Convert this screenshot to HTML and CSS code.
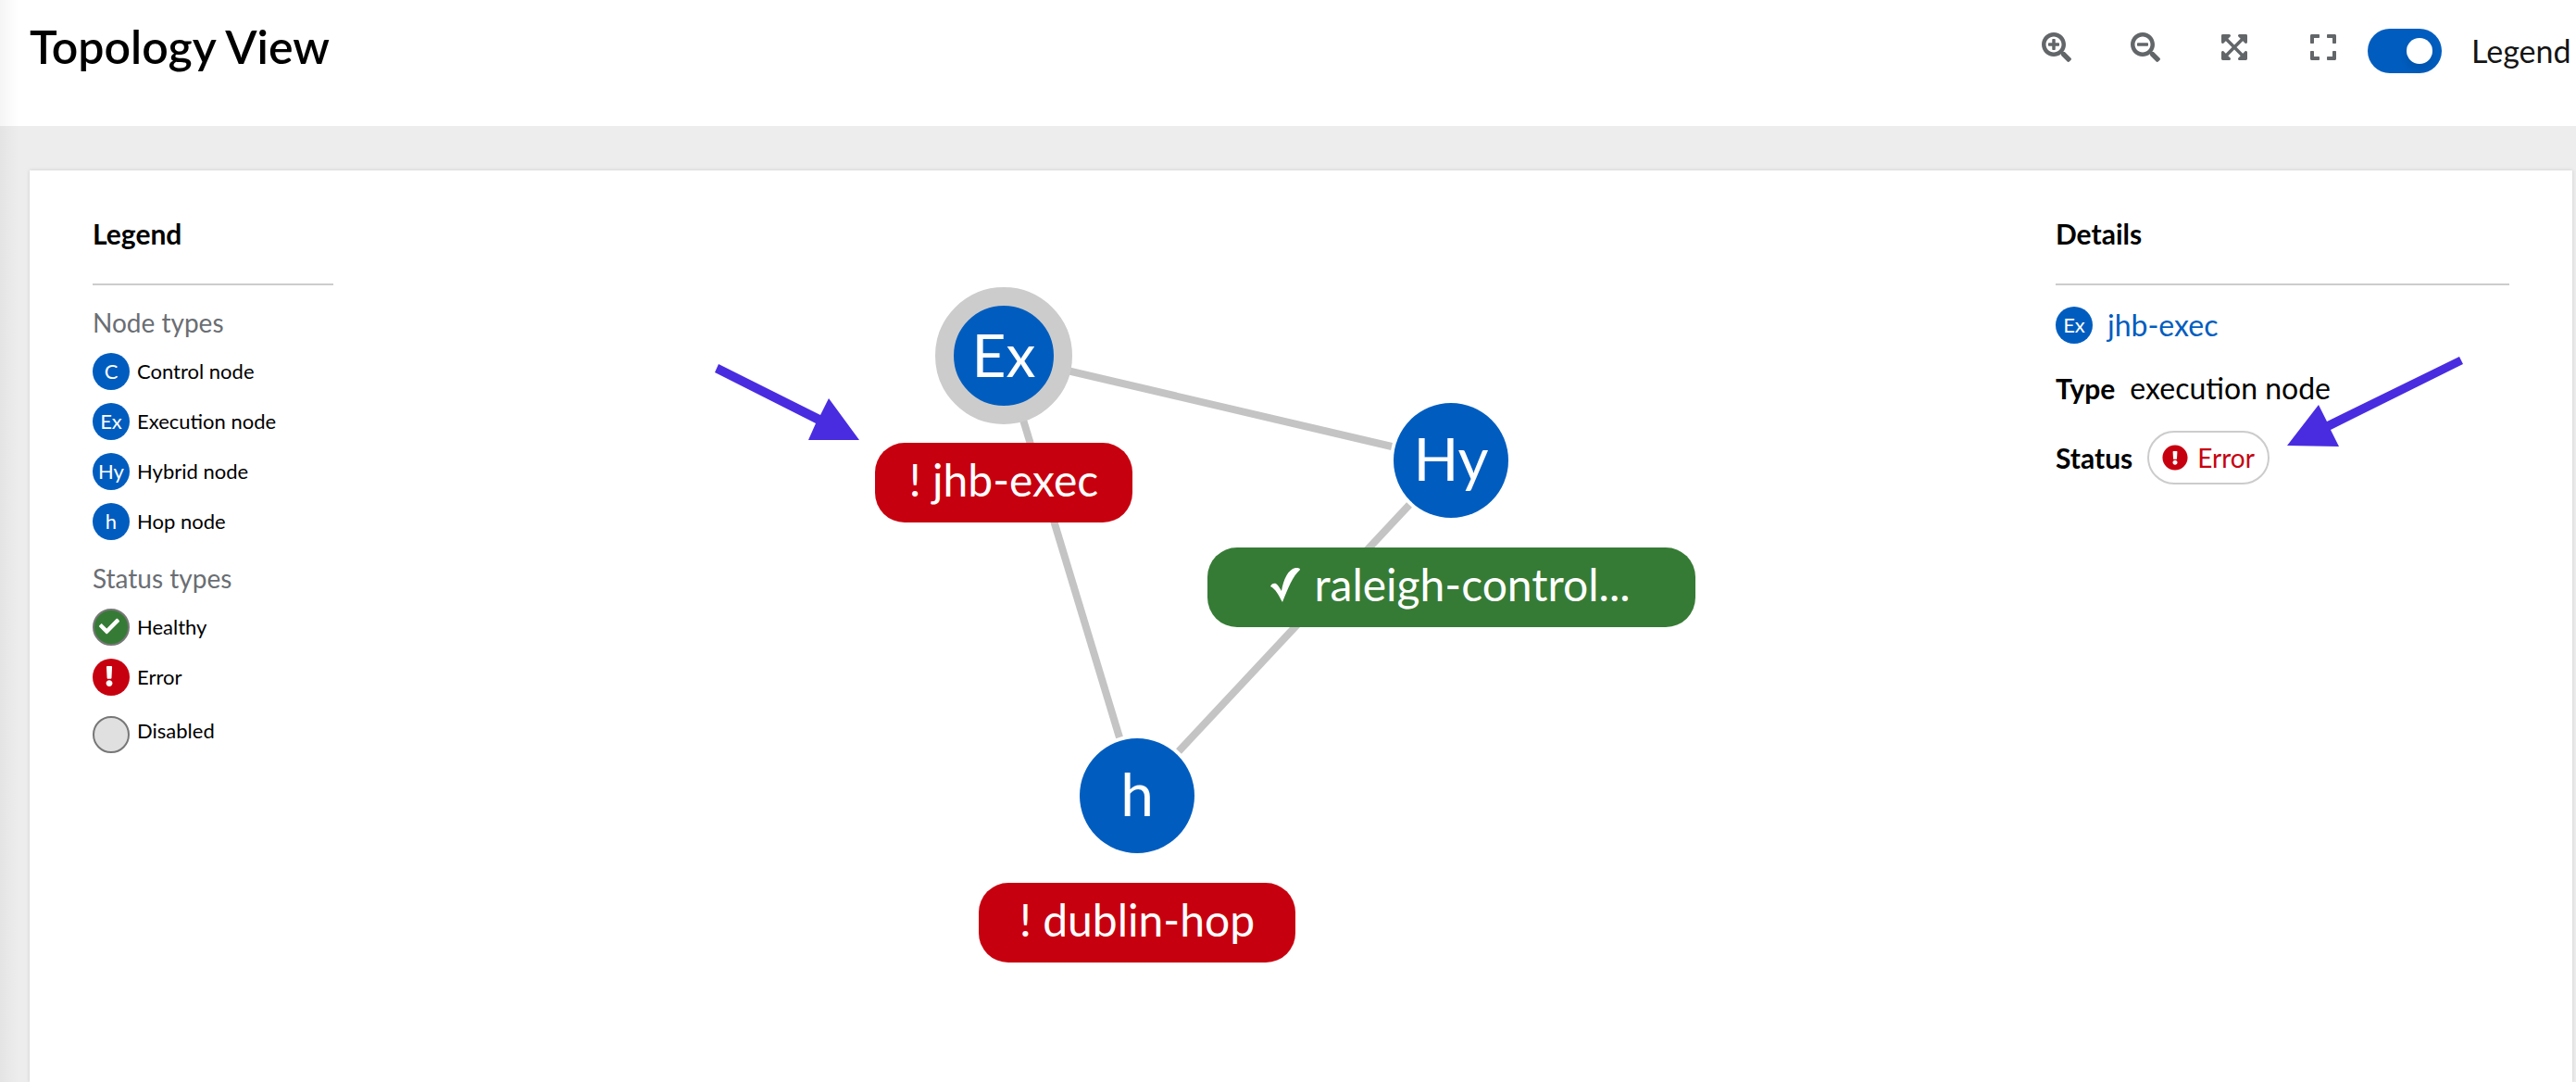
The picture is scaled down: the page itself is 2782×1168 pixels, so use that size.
FILE: index.html
```html
<!DOCTYPE html>
<html lang="en">
<head>
<meta charset="utf-8">
<meta name="viewport" content="width=device-width, initial-scale=1">
<title>Topology View</title>
<link rel="stylesheet" href="styles.css">
</head>
<body>
<header class="page-header">
  <h1 class="page-title">Topology View</h1>
  <div class="toolbar">
    <button class="icon-button" type="button" aria-label="Zoom in">
      <svg class="icon" viewBox="0 0 512 512" aria-hidden="true"><path d="M304 192v32c0 6.600-5.400 12-12 12h-56v56c0 6.600-5.400 12-12 12h-32c-6.600 0-12-5.400-12-12v-56h-56c-6.600 0-12-5.400-12-12v-32c0-6.600 5.400-12 12-12h56v-56c0-6.600 5.400-12 12-12h32c6.600 0 12 5.400 12 12v56h56c6.600 0 12 5.400 12 12zm201 284.700L476.700 505c-9.400 9.400-24.600 9.400-33.900 0L343 405.300c-4.500-4.500-7-10.600-7-17V372c-35.300 27.600-79.700 44-128 44C93.100 416 0 322.900 0 208S93.100 0 208 0s208 93.100 208 208c0 48.300-16.400 92.700-44 128h16.300c6.400 0 12.500 2.500 17 7l99.700 99.700c9.300 9.400 9.300 24.600 0 34zM344 208c0-75.200-60.800-136-136-136S72 132.800 72 208s60.800 136 136 136 136-60.800 136-136z"/></svg>
    </button>
    <button class="icon-button" type="button" aria-label="Zoom out">
      <svg class="icon" viewBox="0 0 512 512" aria-hidden="true"><path d="M304 192v32c0 6.600-5.400 12-12 12H124c-6.600 0-12-5.400-12-12v-32c0-6.600 5.400-12 12-12h168c6.600 0 12 5.400 12 12zm201 284.700L476.700 505c-9.400 9.400-24.600 9.400-33.900 0L343 405.300c-4.500-4.500-7-10.600-7-17V372c-35.300 27.600-79.700 44-128 44C93.100 416 0 322.900 0 208S93.100 0 208 0s208 93.100 208 208c0 48.300-16.400 92.700-44 128h16.300c6.400 0 12.500 2.500 17 7l99.700 99.700c9.300 9.400 9.300 24.600 0 34zM344 208c0-75.200-60.800-136-136-136S72 132.800 72 208s60.800 136 136 136 136-60.800 136-136z"/></svg>
    </button>
    <button class="icon-button" type="button" aria-label="Fit to screen">
      <svg class="icon" viewBox="0 0 448 512" aria-hidden="true"><path d="M448 344v112a23.940 23.940 0 0 1-24 24H312c-21.390 0-32.090-25.900-17-41l36.200-36.200L224 295.600 116.770 402.900 153 439c15.090 15.100 4.390 41-17 41H24a23.940 23.940 0 0 1-24-24V344c0-21.400 25.890-32.100 41-17l36.190 36.200L184.460 256 77.180 148.700 41 185c-15.100 15.100-41 4.400-41-17V56a23.940 23.940 0 0 1 24-24h112c21.390 0 32.090 25.900 17 41l-36.200 36.200L224 216.400l107.230-107.300L295 73c-15.090-15.100-4.390-41 17-41h112a23.940 23.940 0 0 1 24 24v112c0 21.400-25.890 32.100-41 17l-36.190-36.200L263.540 256l107.280 107.300L407 327.100c15.100-15.200 41-4.500 41 16.900z"/></svg>
    </button>
    <button class="icon-button" type="button" aria-label="Reset zoom">
      <svg class="icon" viewBox="0 0 448 512" aria-hidden="true"><path d="M0 180V56c0-13.300 10.700-24 24-24h124c6.600 0 12 5.400 12 12v40c0 6.600-5.400 12-12 12H64v84c0 6.600-5.400 12-12 12H12c-6.600 0-12-5.400-12-12zM288 44v40c0 6.600 5.400 12 12 12h84v84c0 6.600 5.400 12 12 12h40c6.600 0 12-5.400 12-12V56c0-13.300-10.700-24-24-24H300c-6.600 0-12 5.400-12 12zm148 276h-40c-6.600 0-12 5.400-12 12v84h-84c-6.600 0-12 5.400-12 12v40c0 6.600 5.400 12 12 12h124c13.300 0 24-10.700 24-24V332c0-6.600-5.400-12-12-12zM160 468v-40c0-6.600-5.400-12-12-12H64v-84c0-6.600-5.400-12-12-12H12c-6.600 0-12 5.400-12 12v124c0 13.300 10.700 24 24 24h124c6.600 0 12-5.400 12-12z"/></svg>
    </button>
    <div class="switch">
      <input class="switch-input" type="checkbox" id="legend-toggle" checked>
      <label class="switch-label" for="legend-toggle">Legend</label>
    </div>
  </div>
</header>

<main class="page-body">
  <section class="card">
    <aside class="legend">
      <h2 class="panel-title">Legend</h2>
      <h3 class="group-title">Node types</h3>
      <ul class="legend-list">
        <li class="legend-item"><span class="badge">C</span><span>Control node</span></li>
        <li class="legend-item"><span class="badge">Ex</span><span>Execution node</span></li>
        <li class="legend-item"><span class="badge">Hy</span><span>Hybrid node</span></li>
        <li class="legend-item"><span class="badge">h</span><span>Hop node</span></li>
      </ul>
      <h3 class="group-title group-title-spaced">Status types</h3>
      <ul class="legend-list">
        <li class="legend-item">
          <svg class="status-icon" viewBox="0 0 40 40" aria-hidden="true"><circle cx="20" cy="20" r="19" fill="#367b35" stroke="#777" stroke-width="2"/><path transform="translate(7 8) scale(.043)" fill="#fff" d="M173.898 439.404l-166.400-166.400c-9.997-9.997-9.997-26.206 0-36.204l36.203-36.204c9.997-9.998 26.207-9.998 36.204 0L192 312.690 432.095 72.596c9.997-9.997 26.207-9.997 36.204 0l36.203 36.204c9.997 9.997 9.997 26.206 0 36.204l-294.400 294.401c-9.998 9.997-26.207 9.997-36.204-.001z"/></svg>
          <span>Healthy</span>
        </li>
        <li class="legend-item">
          <svg class="status-icon" viewBox="0 0 40 40" aria-hidden="true"><circle cx="20" cy="20" r="20" fill="#c7000f"/><path transform="translate(13.900 8) scale(.043)" fill="#fff" d="M176 432c0 44.112-35.888 80-80 80s-80-35.888-80-80 35.888-80 80-80 80 35.888 80 80zM25.260 25.199l13.600 272C39.499 309.972 50.041 320 62.830 320h66.340c12.789 0 23.331-10.028 23.970-22.801l13.600-272C167.425 11.490 156.496 0 142.770 0H49.230C35.504 0 24.575 11.490 25.260 25.199z"/></svg>
          <span>Error</span>
        </li>
        <li class="legend-item legend-item-disabled">
          <svg class="status-icon" viewBox="0 0 40 40" aria-hidden="true"><circle cx="20" cy="20" r="19" fill="#e0e0e0" stroke="#777" stroke-width="2"/></svg>
          <span class="disabled-text">Disabled</span>
        </li>
      </ul>
    </aside>

    <svg class="graph" viewBox="360 184 1860 984" role="img" aria-label="Mesh topology">
      <g class="edges">
        <line x1="1084" y1="384" x2="1503" y2="482"/>
        <line x1="1084" y1="384" x2="1209" y2="796"/>
        <line x1="1522" y1="545" x2="1273" y2="811"/>
      </g>
      <circle cx="1084" cy="384" r="64" fill="#005dbf" stroke="#ccc" stroke-width="20"/>
      <circle class="node" cx="1567" cy="497" r="62"/>
      <circle class="node" cx="1228" cy="859" r="62"/>
      <g class="node-text">
        <text x="1084" y="407">Ex</text>
        <text x="1567" y="519">Hy</text>
        <text x="1228" y="881">h</text>
      </g>
      <rect class="pill-error" x="945" y="478" width="278" height="86" rx="32"/>
      <rect class="pill-healthy" x="1304" y="591" width="527" height="86" rx="32"/>
      <rect class="pill-error" x="1057" y="953" width="342" height="86" rx="32"/>
      <g class="pill-text">
        <text x="1084" y="536">! jhb-exec</text>
        <text x="1590" y="649">raleigh-control...</text>
        <text x="1228" y="1011">! dublin-hop</text>
      </g>
      <path fill="#fff" d="M1372 633C1373 630 1376 629 1378 630C1381 632 1382 635 1384 638C1386 625 1391 615 1399 613C1401 613 1404 613 1404 615C1396 622 1391 635 1385 650C1381 643 1378 636 1372 633Z"/>
      <polygon class="callout" points="776,393 886,448 895,430 928,475 873,475 881,457 772,402"/>
    </svg>

    <aside class="details">
      <h2 class="panel-title">Details</h2>
      <div class="detail-row"><span class="badge">Ex</span><a class="node-link" href="#jhb-exec">jhb-exec</a></div>
      <dl class="detail-list">
        <div class="detail-row"><dt>Type</dt><dd>execution node</dd></div>
        <div class="detail-row">
          <dt>Status</dt>
          <dd class="status-label">
            <svg class="status-label-icon" viewBox="0 0 512 512" aria-hidden="true"><path d="M504 256c0 136.997-111.043 248-248 248S8 392.997 8 256C8 119.083 119.043 8 256 8s248 111.083 248 248zm-248 50c-25.405 0-46 20.595-46 46s20.595 46 46 46 46-20.595 46-46-20.595-46-46-46zm-43.673-165.346l7.418 136c.347 6.364 5.609 11.346 11.982 11.346h48.546c6.373 0 11.635-4.982 11.982-11.346l7.418-136c.375-6.874-5.098-12.654-11.982-12.654h-63.383c-6.884 0-12.356 5.780-11.981 12.654z"/></svg>
            <span>Error</span>
          </dd>
        </div>
      </dl>
      <svg class="details-callout" viewBox="0 0 190 100" aria-hidden="true"><polygon class="callout" points="186,1 190,9 47,80 56,98 0,97 34,53 43,71"/></svg>
    </aside>
  </section>
</main>
</body>
</html>
```
FILE: styles.css
```css
* {
  box-sizing: border-box;
}

body {
  position: relative;
  display: flex;
  flex-direction: column;
  min-height: 100vh;
  margin: 0;
  background: #ededed;
  color: #000;
  font-family: Lato, "Open Sans", sans-serif;
  font-size: 32px;
  line-height: 40px;
}

body::before {
  content: "";
  position: absolute;
  inset: 0 auto 0 0;
  width: 20px;
  background: linear-gradient(to right, rgba(0, 0, 0, 0.04), rgba(0, 0, 0, 0));
  pointer-events: none;
}

h1, h2, h3, ul, dl, dd {
  margin: 0;
  padding: 0;
}

.page-header {
  display: flex;
  justify-content: space-between;
  align-items: flex-start;
  min-height: 136px;
  padding: 15px 4px 0 32px;
  background: #fff;
}

.page-title {
  padding-top: 5px;
  font-size: 50px;
  font-weight: 600;
  line-height: 60px;
  white-space: nowrap;
}

.toolbar {
  display: flex;
  align-items: flex-start;
}

.icon-button {
  display: flex;
  align-items: center;
  justify-content: center;
  width: 96px;
  height: 72px;
  padding: 0;
  border: 0;
  background: none;
  cursor: pointer;
}

.icon {
  height: 32px;
  fill: #636669;
}

.switch {
  display: flex;
  align-items: center;
  gap: 32px;
  height: 80px;
}

.switch-input {
  appearance: none;
  display: flex;
  align-items: center;
  justify-content: flex-end;
  width: 80px;
  height: 48px;
  margin: 0;
  padding: 0 10px;
  border-radius: 24px;
  background: #005dbf;
}

.switch-input::before {
  content: "";
  width: 28px;
  height: 28px;
  border-radius: 50%;
  background: #fff;
  box-shadow: 0 6px 12px rgba(0, 0, 0, 0.12);
}

.switch-input:not(:checked) {
  justify-content: flex-start;
  background: #777;
}

.switch-label {
  min-width: 109px;
  color: #151515;
  font-size: 34px;
}

.page-body {
  display: flex;
  flex: 1;
  padding: 48px 4px 0 32px;
}

.card {
  display: grid;
  grid-template-columns: 260px minmax(0, 1fr) 490px;
  flex: 1;
  padding: 0 68px;
  background: #fff;
  box-shadow: 0 0 4px rgba(0, 0, 0, 0.14);
}

.legend,
.details {
  padding-top: 50px;
}

.details {
  position: relative;
}

.panel-title {
  margin-bottom: 23px;
  padding-bottom: 36px;
  border-bottom: 2px solid #ccc;
  font-size: 30px;
  font-weight: 700;
  line-height: 36px;
}

.group-title {
  margin-bottom: 16px;
  color: #6a6e73;
  font-size: 28px;
  font-weight: 400;
  line-height: 34px;
}

.group-title-spaced {
  margin-top: 24px;
}

.legend-list {
  display: flex;
  flex-direction: column;
  gap: 14px;
  list-style: none;
}

.legend-item {
  display: flex;
  align-items: center;
  gap: 8px;
  font-size: 22px;
}

.legend-item-disabled {
  padding-top: 8px;
}

.disabled-text {
  padding-bottom: 8px;
  line-height: 32px;
}

.badge {
  flex: none;
  width: 40px;
  height: 40px;
  border-radius: 50%;
  background: #005dbf;
  color: #fff;
  font-size: 22px;
  line-height: 40px;
  text-align: center;
}

.status-icon {
  flex: none;
  width: 40px;
  height: 40px;
}

.graph {
  display: block;
  width: 100%;
}

.edges {
  stroke: #c4c4c4;
  stroke-width: 8px;
}

.node {
  fill: #005dbf;
}

.node-text,
.pill-text {
  fill: #fff;
  text-anchor: middle;
}

.node-text {
  font-size: 64px;
}

.pill-text {
  font-size: 48px;
}

.pill-error {
  fill: #c7000f;
}

.pill-healthy {
  fill: #367b35;
}

.callout {
  fill: #4a2ce0;
}

.detail-row {
  display: flex;
  align-items: center;
  gap: 16px;
}

.detail-list {
  display: flex;
  flex-direction: column;
  gap: 26px;
  margin-top: 28px;
}

.detail-list dt {
  font-size: 30px;
  font-weight: 700;
}

.node-link {
  color: #005dbf;
  text-decoration: none;
}

.status-label {
  display: flex;
  align-items: center;
  gap: 10px;
  height: 58px;
  padding: 0 14px;
  border: 2px solid #ccc;
  border-radius: 29px;
  color: #c7000f;
  font-size: 28px;
}

.status-label-icon {
  width: 28px;
  height: 28px;
  fill: #c7000f;
}

.details-callout {
  position: absolute;
  top: 200px;
  left: 250px;
  width: 190px;
  height: 100px;
}
```
